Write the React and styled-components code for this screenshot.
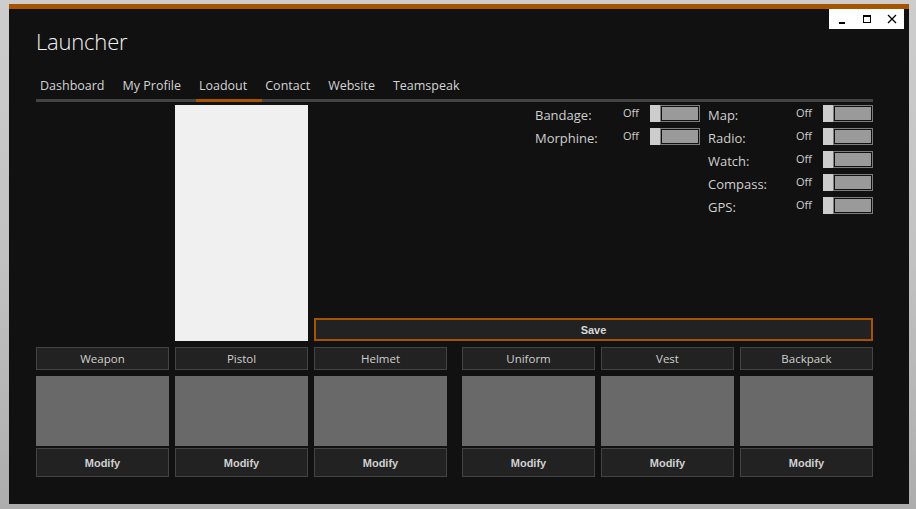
import React from "react";
import styled, { createGlobalStyle } from "styled-components";

const ORANGE = "#a85300";

const GlobalStyle = createGlobalStyle`
  html, body {
    margin: 0;
    padding: 0;
  }
  body {
    width: 916px;
    height: 509px;
    overflow: hidden;
    background: linear-gradient(180deg, #cdcdcd 0%, #c2c2c2 50%, #adadad 100%);
    font-family: "Open Sans", "Noto Sans", sans-serif;
  }
`;

const tabs = ["Dashboard", "My Profile", "Loadout", "Contact", "Website", "Teamspeak"];
const leftToggles = ["Bandage:", "Morphine:"];
const rightToggles = ["Map:", "Radio:", "Watch:", "Compass:", "GPS:"];
const slotsA = ["Weapon", "Pistol", "Helmet"];
const slotsB = ["Uniform", "Vest", "Backpack"];

const Launcher = () => {
  return (
    <>
      <GlobalStyle />
      <Window>
        <Controls>
          <CtrlButton>
            <svg width="8" height="20" viewBox="0 0 8 20">
              <rect x="1" y="13" width="6" height="2" fill="#000" />
            </svg>
          </CtrlButton>
          <CtrlButton>
            <svg width="10" height="20" viewBox="0 0 10 20">
              <rect x="1.5" y="6.5" width="7" height="7" fill="none" stroke="#000" strokeWidth="1" />
              <rect x="1" y="6" width="8" height="2" fill="#000" />
            </svg>
          </CtrlButton>
          <CtrlButton>
            <svg width="10" height="20" viewBox="0 0 10 20">
              <path d="M1 6 L9 14 M9 6 L1 14" stroke="#000" strokeWidth="1.3" />
            </svg>
          </CtrlButton>
        </Controls>

        <Title>Launcher</Title>

        <TabBar>
          {tabs.map((t) => (
            <Tab key={t} active={t === "Loadout"}>
              {t}
            </Tab>
          ))}
        </TabBar>

        <Main>
          <div />
          <Preview />
          <RightPane>
            <ToggleArea>
              <ToggleColumn>
                {leftToggles.map((l) => (
                  <ToggleRow key={l}>
                    <ToggleLabel>{l}</ToggleLabel>
                    <OffText>Off</OffText>
                    <Switch>
                      <Knob />
                      <Track />
                    </Switch>
                  </ToggleRow>
                ))}
              </ToggleColumn>
              <ToggleColumn>
                {rightToggles.map((l) => (
                  <ToggleRow key={l}>
                    <ToggleLabel>{l}</ToggleLabel>
                    <OffText>Off</OffText>
                    <Switch>
                      <Knob />
                      <Track />
                    </Switch>
                  </ToggleRow>
                ))}
              </ToggleColumn>
            </ToggleArea>
            <SaveButton>Save</SaveButton>
          </RightPane>
        </Main>

        <Slots>
          <SlotGroup>
            {slotsA.map((s) => (
              <Slot key={s}>
                <SlotName>{s}</SlotName>
                <SlotImage />
                <ModifyButton>Modify</ModifyButton>
              </Slot>
            ))}
          </SlotGroup>
          <SlotGroup>
            {slotsB.map((s) => (
              <Slot key={s}>
                <SlotName>{s}</SlotName>
                <SlotImage />
                <ModifyButton>Modify</ModifyButton>
              </Slot>
            ))}
          </SlotGroup>
        </Slots>
      </Window>
    </>
  );
};

export default Launcher;

const Window = styled.div`
  position: relative;
  box-sizing: border-box;
  margin: 4px 0 0 9px;
  width: 900px;
  height: 500px;
  background: #111111;
  border-top: 5px solid ${ORANGE};
  padding: 0 36px 0 27px;
  display: flex;
  flex-direction: column;
`;

const Controls = styled.div`
  position: absolute;
  top: 0;
  right: 5px;
  width: 75px;
  height: 20px;
  background: #fff;
  display: flex;
`;

const CtrlButton = styled.div`
  width: 25px;
  height: 20px;
  display: flex;
  align-items: center;
  justify-content: center;
  svg {
    display: block;
  }
`;

const Title = styled.div`
  margin-top: 17px;
  font-size: 22px;
  line-height: 30px;
  font-weight: 300;
  color: #f2f2f2;
  letter-spacing: -0.2px;
`;

const TabBar = styled.div`
  margin-top: 21px;
  display: flex;
  border-bottom: 3px solid #444;
`;

const Tab = styled.div`
  font-size: 12.5px;
  line-height: 18px;
  color: #d4d4d4;
  padding: 0 15px 4px 3px;
  margin-bottom: -3px;
  border-bottom: 3px solid ${(p) => (p.active ? ORANGE : "transparent")};
  &:first-child {
    padding-left: 4px;
  }
`;

const Main = styled.div`
  margin-top: 3px;
  height: 236px;
  display: grid;
  grid-template-columns: 133px 133px 1fr;
  column-gap: 6px;
`;

const Preview = styled.div`
  background: #f0f0f0;
`;

const RightPane = styled.div`
  display: flex;
  flex-direction: column;
  justify-content: space-between;
`;

const ToggleArea = styled.div`
  display: flex;
  justify-content: flex-end;
  gap: 8px;
`;

const ToggleColumn = styled.div`
  display: flex;
  flex-direction: column;
  gap: 6px;
`;

const ToggleRow = styled.div`
  display: flex;
  height: 17px;
  line-height: 17px;
`;

const ToggleLabel = styled.div`
  width: 88px;
  padding-top: 2px;
  font-size: 13px;
  color: #cfcfcf;
`;

const OffText = styled.div`
  width: 27px;
  font-size: 11px;
  color: #d0d0d0;
  line-height: 15px;
`;

const Switch = styled.div`
  display: flex;
  width: 50px;
  height: 17px;
`;

const Knob = styled.div`
  width: 10px;
  background: #cdcdcd;
`;

const Track = styled.div`
  box-sizing: border-box;
  flex: 1;
  border: 1px solid #7d7d7d;
  box-shadow: inset 0 0 0 1px #111;
  background: #9a9a9a;
`;

const SaveButton = styled.div`
  box-sizing: border-box;
  height: 23px;
  border: 2px solid ${ORANGE};
  background: #222;
  color: #d8d8d8;
  font-family: "Liberation Sans", Arial, sans-serif;
  font-weight: bold;
  font-size: 11px;
  display: flex;
  align-items: center;
  justify-content: center;
`;

const Slots = styled.div`
  margin-top: 6px;
  display: flex;
  gap: 15px;
`;

const SlotGroup = styled.div`
  display: flex;
  gap: 6px;
`;

const Slot = styled.div`
  width: 133px;
  display: flex;
  flex-direction: column;
`;

const SlotName = styled.div`
  box-sizing: border-box;
  height: 23px;
  padding-bottom: 1px;
  border: 1px solid #444;
  background: #222;
  color: #cfcfcf;
  font-size: 11.5px;
  display: flex;
  align-items: center;
  justify-content: center;
`;

const SlotImage = styled.div`
  margin-top: 6px;
  height: 70px;
  background: #696969;
`;

const ModifyButton = styled.div`
  box-sizing: border-box;
  margin-top: 2px;
  height: 29px;
  border: 1px solid #444;
  background: #222;
  color: #d0d0d0;
  font-family: "Liberation Sans", Arial, sans-serif;
  font-weight: bold;
  font-size: 11px;
  display: flex;
  align-items: center;
  justify-content: center;
`;
